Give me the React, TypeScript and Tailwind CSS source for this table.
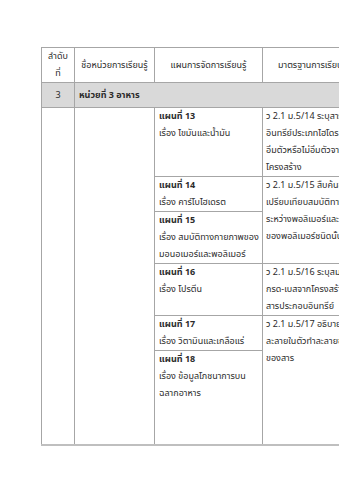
const plans = [
  { no: "13", title: ["เรื่อง ไขมันและน้ำมัน"] },
  { no: "14", title: ["เรื่อง คาร์โบไฮเดรต"] },
  { no: "15", title: ["เรื่อง สมบัติทางกายภาพของ", "มอนอเมอร์และพอลิเมอร์"] },
  { no: "16", title: ["เรื่อง โปรตีน"] },
  { no: "17", title: ["เรื่อง วิตามินและเกลือแร่"] },
  { no: "18", title: ["เรื่อง ข้อมูลโภชนาการบน", "ฉลากอาหาร"] },
];

const Lines = ({ lines }: { lines: string[] }) => (
  <>
    {lines.map((l, i) => (
      <div key={i} className="whitespace-nowrap">
        {l}
      </div>
    ))}
  </>
);

const PlanCell = ({ idx, last }: { idx: number; last?: boolean }) => (
  <td
    className={
      "border border-[#a6a6a6] border-l-[#4d4d4d] px-1 align-top " +
      (last ? "h-[94px]" : "")
    }
  >
    <div className="font-bold whitespace-nowrap">แผนที่ {plans[idx].no}</div>
    <Lines lines={plans[idx].title} />
  </td>
);

const StdCell = ({ lines, rows }: { lines: string[]; rows?: number }) => (
  <td
    rowSpan={rows}
    className="border border-[#a6a6a6] px-[3px] align-top overflow-hidden"
  >
    <Lines lines={lines} />
  </td>
);

export default function App() {
  return (
    <div
      className="w-[339px] h-[480px] overflow-hidden bg-white pl-[41px] pt-[47px] text-[9px] leading-[17px] text-[#2b2b2b]"
      style={{ fontFamily: "Tahoma, 'Noto Sans Thai', 'Noto Sans', 'DejaVu Sans', sans-serif" }}
    >
      <table className="table-fixed border-collapse w-[321px]">
        <colgroup>
          <col className="w-[33px]" />
          <col className="w-[80px]" />
          <col className="w-[108px]" />
          <col className="w-[100px]" />
        </colgroup>
        <thead>
          <tr className="h-[35px]">
            <th className="border border-[#a6a6a6] font-normal text-center">
              <div>ลำดับ</div>
              <div>ที่</div>
            </th>
            <th className="border border-[#a6a6a6] font-normal text-center whitespace-nowrap">
              ชื่อหน่วยการเรียนรู้
            </th>
            <th className="border border-[#a6a6a6] font-normal text-center whitespace-nowrap">
              แผนการจัดการเรียนรู้
            </th>
            <th className="border border-[#a6a6a6] font-normal text-center whitespace-nowrap">
              มาตรฐานการเรียนรู้
            </th>
          </tr>
        </thead>
        <tbody>
          <tr className="h-[25px] bg-[#d9d9d9]">
            <td className="border border-[#a6a6a6] text-center">3</td>
            <td colSpan={3} className="border border-[#a6a6a6] px-1 font-bold">
              หน่วยที่ 3 อาหาร
            </td>
          </tr>
          <tr>
            <td rowSpan={6} className="border border-[#a6a6a6] border-b-2 border-b-[#bfbfbf]" />
            <td rowSpan={6} className="border border-[#a6a6a6] border-b-2 border-b-[#bfbfbf]" />
            <PlanCell idx={0} />
            <StdCell
              lines={[
                "ว 2.1 ม.5/14 ระบุสารประกอบ",
                "อินทรีย์ประเภทไฮโดรคาร์บอนชนิด",
                "อิ่มตัวหรือไม่อิ่มตัวจากสูตร",
                "โครงสร้าง",
              ]}
            />
          </tr>
          <tr>
            <PlanCell idx={1} />
            <StdCell
              rows={2}
              lines={[
                "ว 2.1 ม.5/15 สืบค้นข้อมูลและ",
                "เปรียบเทียบสมบัติทางกายภาพ",
                "ระหว่างพอลิเมอร์และมอนอเมอร์",
                "ของพอลิเมอร์ชนิดนั้น",
              ]}
            />
          </tr>
          <tr>
            <PlanCell idx={2} />
          </tr>
          <tr>
            <PlanCell idx={3} />
            <StdCell
              lines={[
                "ว 2.1 ม.5/16 ระบุสมบัติความเป็น",
                "กรด-เบสจากโครงสร้างของ",
                "สารประกอบอินทรีย์",
              ]}
            />
          </tr>
          <tr>
            <PlanCell idx={4} />
            <StdCell
              rows={2}
              lines={[
                "ว 2.1 ม.5/17 อธิบายสมบัติการ",
                "ละลายในตัวทำละลายชนิดต่างๆ",
                "ของสาร",
              ]}
            />
          </tr>
          <tr className="border-b-2 border-b-[#bfbfbf]">
            <PlanCell idx={5} last />
          </tr>
        </tbody>
      </table>
    </div>
  );
}
